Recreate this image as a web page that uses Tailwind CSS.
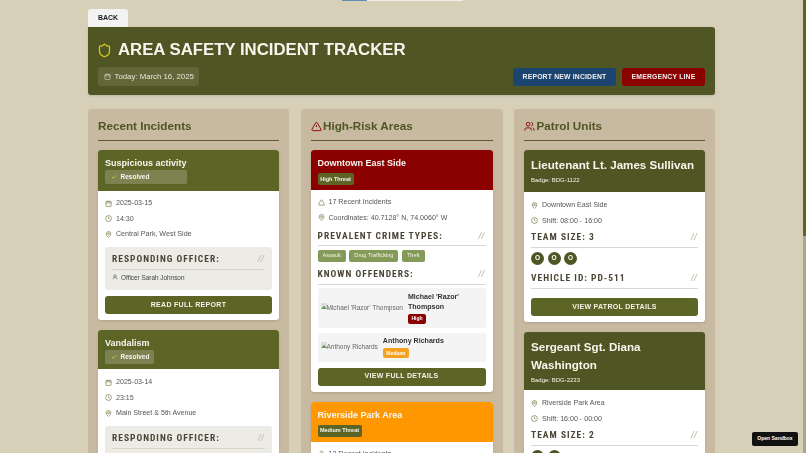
<!DOCTYPE html>
<html lang="en">
<head>
<meta charset="UTF-8">
<title>Area Safety Incident Tracker</title>
<script src="https://cdn.jsdelivr.net/npm/@tailwindcss/browser@4"></script>
</head>
<body class="h-[453px] overflow-hidden bg-[#d8cfb9] font-['Liberation_Sans',sans-serif] text-[#333]">
<div class="relative h-[453px] overflow-hidden">
  <!-- strip of the page above, cut off by the top edge -->
  <div class="absolute left-[342px] top-0 flex h-px">
    <div class="w-[25px] bg-[#5b8fb5]"></div>
    <div class="w-[96px] bg-[#f0efe9]"></div>
  </div>
  <!-- scrollbar -->
  <div class="absolute right-0 top-0 h-[453px] w-[3px] bg-[#a9a68f]"><div class="h-[236px] w-[3px] bg-[#5c6426]"></div></div>
  <div class="absolute bottom-[7px] right-[8px] z-10 flex h-[14px] w-[46px] items-center justify-center rounded-[2px] bg-[#111] text-[5px] font-bold text-white">Open Sandbox</div>

  <main class="ml-[88px] w-[627px] pt-[9px] will-change-transform">
    <button class="block h-[18px] w-[40px] rounded-t-[3px] bg-[#f3f3f1] text-[7px] font-bold text-[#1a1a2a]">BACK</button>

    <header class="flex h-[68px] justify-between rounded-b-[3px] rounded-tr-[3px] bg-[#4f5623] px-[10px] pt-[11px] shadow-sm">
      <div>
        <div class="flex items-center gap-[6.5px]">
          <svg class="-ml-[1.5px] h-[15px] w-[15px] text-[#dcc81c]" viewBox="0 0 24 24" fill="none" stroke="currentColor" stroke-width="2" stroke-linecap="round" stroke-linejoin="round"><path d="M20 13c0 5-3.5 7.5-7.66 8.95a1 1 0 0 1-.67-.01C7.5 20.5 4 18 4 13V6a1 1 0 0 1 1-1c2 0 4.5-1.2 6.24-2.72a1.17 1.17 0 0 1 1.52 0C14.51 3.81 17 5 19 5a1 1 0 0 1 1 1z"/></svg>
          <h1 class="text-[16.75px] font-bold leading-[24px] text-[#f7f5ee]">AREA SAFETY INCIDENT TRACKER</h1>
        </div>
        <div class="mt-[5px] flex h-[19px] w-[101px] items-center gap-[3.5px] rounded-[3px] bg-white/10 pl-[6px] text-[7.8px] text-[#e8e5d8]">
          <svg class="h-[7px] w-[7px]" viewBox="0 0 24 24" fill="none" stroke="currentColor" stroke-width="2"><rect x="3" y="5" width="18" height="17" rx="2"/><path d="M3 10h18M8 2v4M16 2v4"/></svg>
          Today: March 16, 2025
        </div>
      </div>
      <div class="mt-[30px] flex h-[18px] gap-[6px] text-[6.8px] font-bold tracking-[0.2px] text-[#eee]">
        <button class="w-[103px] rounded-[3px] bg-[#1c4470]">REPORT NEW INCIDENT</button>
        <button class="w-[83px] rounded-[3px] bg-[#8b0000]">EMERGENCY LINE</button>
      </div>
    </header>

    <div class="mt-[14px] grid grid-cols-[201px_202px_201px] gap-x-[11.5px]">

      <!-- Recent Incidents -->
      <section class="rounded-[3px] bg-[#c8baa0] px-[10px] pt-[10px]">
        <h2 class="h-[22px] border-b-[1px] border-[#5d5a30] text-[11.7px] font-bold leading-[14px] text-[#4f5623]">Recent Incidents</h2>
        <div class="mt-[9px] flex flex-col gap-[10px]">
          <article class="overflow-hidden rounded-[3px] bg-white shadow-sm">
            <div class="h-[41px] bg-[#5c6426] px-[7px] pt-[7px] text-[#f7f5ee]">
              <h3 class="text-[9px] font-bold leading-[12px]">Suspicious activity</h3>
              <span class="mt-[1px] flex h-[14px] w-[82px] items-center gap-[3.5px] rounded-[2px] bg-white/20 pl-[6px] text-[6.5px] font-bold">
                <svg class="h-[6px] w-[6px] text-[#d8d050]" viewBox="0 0 24 24" fill="none" stroke="currentColor" stroke-width="3"><path d="M20 6 9 17l-5-5"/></svg>Resolved</span>
            </div>
            <div class="px-[7px] pt-[8px] pb-[6px]">
              <ul class="flex flex-col gap-[7.5px] text-[7.1px] leading-[8px] text-[#555]">
                <li class="flex items-center gap-[4px]"><svg class="h-[7px] w-[7px] text-[#5c6426]" viewBox="0 0 24 24" fill="none" stroke="currentColor" stroke-width="2"><rect x="3" y="5" width="18" height="17" rx="2"/><path d="M3 10h18M8 2v4M16 2v4"/></svg>2025-03-15</li>
                <li class="flex items-center gap-[4px]"><svg class="h-[7px] w-[7px] text-[#5c6426]" viewBox="0 0 24 24" fill="none" stroke="currentColor" stroke-width="2"><circle cx="12" cy="12" r="10"/><path d="M12 6v6l4 2"/></svg>14:30</li>
                <li class="flex items-center gap-[4px]"><svg class="h-[7px] w-[7px] text-[#5c6426]" viewBox="0 0 24 24" fill="none" stroke="currentColor" stroke-width="2"><path d="M20 10c0 6-8 12-8 12s-8-6-8-12a8 8 0 0 1 16 0Z"/><circle cx="12" cy="10" r="3"/></svg>Central Park, West Side</li>
              </ul>
              <div class="mt-[8.5px] h-[43px] rounded-[3px] bg-[#ecebe5] px-[7px] pt-[4px]">
                <div class="flex h-[19px] items-end justify-between border-b border-[#d8d4c4] pb-[3.5px] font-['Roboto',sans-serif] [font-stretch:75%] text-[9.5px] font-bold leading-[12px] tracking-[1px] text-[#4a4535]"><span>RESPONDING OFFICER:</span><span class="italic text-[#c8c4b2]">//</span></div>
                <div class="mt-[3px] flex items-center gap-[3px] text-[6.4px] text-[#444]"><svg class="h-[6px] w-[6px]" viewBox="0 0 24 24" fill="none" stroke="currentColor" stroke-width="2"><circle cx="12" cy="8" r="5"/><path d="M20 21a8 8 0 0 0-16 0"/></svg>Officer Sarah Johnson</div>
              </div>
              <button class="mt-[6.5px] block h-[18px] w-full rounded-[3px] bg-[#5c6426] text-[7px] font-bold tracking-[0.3px] text-[#f5f3e8]">READ FULL REPORT</button>
            </div>
          </article>
          <article class="overflow-hidden rounded-[3px] bg-white shadow-sm">
            <div class="h-[39px] bg-[#5c6426] px-[7px] pt-[7px] text-[#f7f5ee]">
              <h3 class="text-[9px] font-bold leading-[12px]">Vandalism</h3>
              <span class="mt-[1px] flex h-[14px] w-[49px] items-center gap-[3.5px] rounded-[2px] bg-white/20 pl-[6px] text-[6.5px] font-bold">
                <svg class="h-[6px] w-[6px] text-[#d8d050]" viewBox="0 0 24 24" fill="none" stroke="currentColor" stroke-width="3"><path d="M20 6 9 17l-5-5"/></svg>Resolved</span>
            </div>
            <div class="px-[7px] pt-[9px] pb-[6px]">
              <ul class="flex flex-col gap-[7.5px] text-[7.1px] leading-[8px] text-[#555]">
                <li class="flex items-center gap-[4px]"><svg class="h-[7px] w-[7px] text-[#5c6426]" viewBox="0 0 24 24" fill="none" stroke="currentColor" stroke-width="2"><rect x="3" y="5" width="18" height="17" rx="2"/><path d="M3 10h18M8 2v4M16 2v4"/></svg>2025-03-14</li>
                <li class="flex items-center gap-[4px]"><svg class="h-[7px] w-[7px] text-[#5c6426]" viewBox="0 0 24 24" fill="none" stroke="currentColor" stroke-width="2"><circle cx="12" cy="12" r="10"/><path d="M12 6v6l4 2"/></svg>23:15</li>
                <li class="flex items-center gap-[4px]"><svg class="h-[7px] w-[7px] text-[#5c6426]" viewBox="0 0 24 24" fill="none" stroke="currentColor" stroke-width="2"><path d="M20 10c0 6-8 12-8 12s-8-6-8-12a8 8 0 0 1 16 0Z"/><circle cx="12" cy="10" r="3"/></svg>Main Street &amp; 5th Avenue</li>
              </ul>
              <div class="mt-[8.5px] h-[43px] rounded-[3px] bg-[#ecebe5] px-[7px] pt-[4px]">
                <div class="flex h-[19px] items-end justify-between border-b border-[#d8d4c4] pb-[3.5px] font-['Roboto',sans-serif] [font-stretch:75%] text-[9.5px] font-bold leading-[12px] tracking-[1px] text-[#4a4535]"><span>RESPONDING OFFICER:</span><span class="italic text-[#c8c4b2]">//</span></div>
              </div>
            </div>
          </article>
        </div>
      </section>

      <!-- High-Risk Areas -->
      <section class="rounded-[3px] bg-[#c8baa0] px-[10px] pt-[10px]">
        <h2 class="flex h-[22px] items-start gap-[1.5px] border-b-[1px] border-[#5d5a30] text-[11.7px] font-bold leading-[14px] text-[#4f5623]"><svg class="mt-[2px] h-[11px] w-[11px] text-[#8b0000]" viewBox="0 0 24 24" fill="none" stroke="currentColor" stroke-width="2"><path d="m21.7 18-8-14a2 2 0 0 0-3.5 0l-8 14A2 2 0 0 0 4 21h16a2 2 0 0 0 1.7-3Z"/><path d="M12 9v4M12 17h.01"/></svg>High-Risk Areas</h2>
        <div class="mt-[9px] flex flex-col gap-[10px]">
          <article class="overflow-hidden rounded-[3px] bg-white shadow-sm">
            <div class="h-[40px] bg-[#8b0000] px-[7px] pt-[7px] text-[#f7f5ee]">
              <h3 class="text-[9px] font-bold leading-[12px]">Downtown East Side</h3>
              <span class="mt-[4px] flex h-[12px] w-[36px] items-center justify-center rounded-[2px] bg-[#5c6426] text-[5.5px] font-bold">High Threat</span>
            </div>
            <div class="px-[7px] pt-[8px] pb-[6px]">
              <ul class="flex flex-col gap-[7.5px] text-[7.1px] leading-[8px] text-[#555]">
                <li class="flex items-center gap-[4px]"><svg class="h-[7px] w-[7px] text-[#5c6426]" viewBox="0 0 24 24" fill="none" stroke="currentColor" stroke-width="2"><path d="m21.7 18-8-14a2 2 0 0 0-3.5 0l-8 14A2 2 0 0 0 4 21h16a2 2 0 0 0 1.7-3Z"/></svg>17 Recent Incidents</li>
                <li class="flex items-center gap-[4px]"><svg class="h-[7px] w-[7px] text-[#5c6426]" viewBox="0 0 24 24" fill="none" stroke="currentColor" stroke-width="2"><path d="M20 10c0 6-8 12-8 12s-8-6-8-12a8 8 0 0 1 16 0Z"/><circle cx="12" cy="10" r="3"/></svg>Coordinates: 40.7128° N, 74.0060° W</li>
              </ul>
              <div class="mt-[6px] flex h-[18.5px] items-end justify-between border-b border-[#d8d8d8] pb-[3.5px] font-['Roboto',sans-serif] [font-stretch:75%] text-[9.5px] font-bold leading-[12px] tracking-[1px] text-[#4a4535]"><span>PREVALENT CRIME TYPES:</span><span class="italic text-[#c8c4b2]">//</span></div>
              <div class="mt-[3.5px] flex gap-[3.5px] text-[5.6px] text-[#f5f3e8]">
                <span class="flex h-[12px] items-center rounded-[2px] bg-[#849a58] px-[5px]">Assault</span>
                <span class="flex h-[12px] items-center rounded-[2px] bg-[#849a58] px-[5px]">Drug Trafficking</span>
                <span class="flex h-[12px] items-center rounded-[2px] bg-[#849a58] px-[5px]">Theft</span>
              </div>
              <div class="mt-[4px] flex h-[19px] items-end justify-between border-b border-[#d8d8d8] pb-[3.5px] font-['Roboto',sans-serif] [font-stretch:75%] text-[9.5px] font-bold leading-[12px] tracking-[1px] text-[#4a4535]"><span>KNOWN OFFENDERS:</span><span class="italic text-[#c8c4b2]">//</span></div>
              <div class="mt-[3px] flex h-[40px] items-center gap-[5px] rounded-[2px] bg-[#f4f4f4] pl-[3px]">
                <span class="flex items-center whitespace-nowrap text-[6.5px] text-[#666]"><svg class="h-[6px] w-[6px] shrink-0 -translate-y-[2px]" viewBox="0 0 16 16"><rect width="16" height="16" fill="#ddd"/><path d="M0 16 8 7l8 9Z" fill="#6a9a5a"/></svg>Michael 'Razor' Thompson</span>
                <div class="text-[7.1px] font-bold leading-[10.5px] text-[#333]">Michael 'Razor' Thompson<span class="mt-[1px] flex h-[10px] w-[18px] items-center justify-center rounded-[2px] bg-[#8b0000] text-[5px] text-white">High</span></div>
              </div>
              <div class="mt-[5px] flex h-[29px] items-center gap-[5px] rounded-[2px] bg-[#f4f4f4] pl-[3px]">
                <span class="flex items-center whitespace-nowrap text-[6.5px] text-[#666]"><svg class="h-[6px] w-[6px] shrink-0 -translate-y-[2px]" viewBox="0 0 16 16"><rect width="16" height="16" fill="#ddd"/><path d="M0 16 8 7l8 9Z" fill="#6a9a5a"/></svg>Anthony Richards</span>
                <div class="text-[7.1px] font-bold leading-[10.5px] text-[#333]">Anthony Richards<span class="mt-[1px] flex h-[10px] w-[26px] items-center justify-center rounded-[2px] bg-[#f5a020] text-[5px] text-white">Medium</span></div>
              </div>
              <button class="mt-[6px] block h-[18px] w-full rounded-[3px] bg-[#5c6426] text-[7px] font-bold tracking-[0.3px] text-[#f5f3e8]">VIEW FULL DETAILS</button>
            </div>
          </article>
          <article class="overflow-hidden rounded-[3px] bg-white shadow-sm">
            <div class="h-[40px] bg-[#ff9800] px-[7px] pt-[7px] text-[#f7f5ee]">
              <h3 class="text-[9px] font-bold leading-[12px]">Riverside Park Area</h3>
              <span class="mt-[4px] flex h-[12px] w-[44px] items-center justify-center rounded-[2px] bg-[#5c6426] text-[5.5px] font-bold">Medium Threat</span>
            </div>
            <ul class="flex flex-col px-[7px] pt-[8px] text-[7.1px] leading-[8px] text-[#555]">
              <li class="flex items-center gap-[4px]"><svg class="h-[7px] w-[7px] text-[#5c6426]" viewBox="0 0 24 24" fill="none" stroke="currentColor" stroke-width="2"><path d="m21.7 18-8-14a2 2 0 0 0-3.5 0l-8 14A2 2 0 0 0 4 21h16a2 2 0 0 0 1.7-3Z"/></svg>12 Recent Incidents</li>
            </ul>
          </article>
        </div>
      </section>

      <!-- Patrol Units -->
      <section class="rounded-[3px] bg-[#c8baa0] px-[10px] pt-[10px]">
        <h2 class="flex h-[22px] items-start gap-[1.5px] border-b-[1px] border-[#5d5a30] text-[11.7px] font-bold leading-[14px] text-[#4f5623]"><svg class="mt-[2px] h-[11px] w-[11px] text-[#8b0000]" viewBox="0 0 24 24" fill="none" stroke="currentColor" stroke-width="2"><path d="M16 21v-2a4 4 0 0 0-4-4H6a4 4 0 0 0-4 4v2"/><circle cx="9" cy="7" r="4"/><path d="M22 21v-2a4 4 0 0 0-3-3.87M16 3.13a4 4 0 0 1 0 7.75"/></svg>Patrol Units</h2>
        <div class="mt-[9px] flex flex-col gap-[10px]">
          <article class="overflow-hidden rounded-[3px] bg-white shadow-sm">
            <div class="h-[42px] bg-[#4f5623] px-[7px] pt-[7px] text-[#f7f5ee]">
              <h3 class="whitespace-nowrap text-[11.6px] font-bold leading-[16px]">Lieutenant Lt. James Sullivan</h3>
              <p class="mt-[3px] text-[6px] leading-[8px]">Badge: BDG-1122</p>
            </div>
            <div class="px-[7px] pt-[9px] pb-[6px]">
              <ul class="flex flex-col gap-[7.5px] text-[7.1px] leading-[8px] text-[#555]">
                <li class="flex items-center gap-[4px]"><svg class="h-[7px] w-[7px] text-[#5c6426]" viewBox="0 0 24 24" fill="none" stroke="currentColor" stroke-width="2"><path d="M20 10c0 6-8 12-8 12s-8-6-8-12a8 8 0 0 1 16 0Z"/><circle cx="12" cy="10" r="3"/></svg>Downtown East Side</li>
                <li class="flex items-center gap-[4px]"><svg class="h-[7px] w-[7px] text-[#5c6426]" viewBox="0 0 24 24" fill="none" stroke="currentColor" stroke-width="2"><circle cx="12" cy="12" r="10"/><path d="M12 6v6l4 2"/></svg>Shift: 08:00 - 16:00</li>
              </ul>
              <div class="mt-[4px] flex h-[19px] items-end justify-between border-b border-[#d8d8d8] pb-[3.5px] font-['Roboto',sans-serif] [font-stretch:75%] text-[9.5px] font-bold leading-[12px] tracking-[1px] text-[#4a4535]"><span>TEAM SIZE: 3</span><span class="italic text-[#c8c4b2]">//</span></div>
              <div class="mt-[4px] flex gap-[3.5px]">
                <span class="flex h-[13px] w-[13px] items-center justify-center rounded-full bg-[#4f5623] text-[6.5px] font-bold text-white">O</span>
                <span class="flex h-[13px] w-[13px] items-center justify-center rounded-full bg-[#4f5623] text-[6.5px] font-bold text-white">O</span>
                <span class="flex h-[13px] w-[13px] items-center justify-center rounded-full bg-[#4f5623] text-[6.5px] font-bold text-white">O</span>
              </div>
              <div class="mt-[5px] flex h-[19px] items-end justify-between border-b border-[#d8d8d8] pb-[3.5px] font-['Roboto',sans-serif] [font-stretch:75%] text-[9.5px] font-bold leading-[12px] tracking-[1px] text-[#4a4535]"><span>VEHICLE ID: PD-511</span><span class="italic text-[#c8c4b2]">//</span></div>
              <button class="mt-[9.5px] block h-[18px] w-full rounded-[3px] bg-[#5c6426] text-[7px] font-bold tracking-[0.3px] text-[#f5f3e8]">VIEW PATROL DETAILS</button>
            </div>
          </article>
          <article class="overflow-hidden rounded-[3px] bg-white shadow-sm">
            <div class="h-[58px] bg-[#4f5623] px-[7px] pt-[6px] text-[#f7f5ee]">
              <h3 class="text-[11.6px] font-bold leading-[18px]">Sergeant Sgt. Diana Washington</h3>
              <p class="mt-[2px] text-[6px] leading-[8px]">Badge: BDG-2233</p>
            </div>
            <div class="px-[7px] pt-[9px]">
              <ul class="flex flex-col gap-[7.5px] text-[7.1px] leading-[8px] text-[#555]">
                <li class="flex items-center gap-[4px]"><svg class="h-[7px] w-[7px] text-[#5c6426]" viewBox="0 0 24 24" fill="none" stroke="currentColor" stroke-width="2"><path d="M20 10c0 6-8 12-8 12s-8-6-8-12a8 8 0 0 1 16 0Z"/><circle cx="12" cy="10" r="3"/></svg>Riverside Park Area</li>
                <li class="flex items-center gap-[4px]"><svg class="h-[7px] w-[7px] text-[#5c6426]" viewBox="0 0 24 24" fill="none" stroke="currentColor" stroke-width="2"><circle cx="12" cy="12" r="10"/><path d="M12 6v6l4 2"/></svg>Shift: 16:00 - 00:00</li>
              </ul>
              <div class="mt-[4px] flex h-[19px] items-end justify-between border-b border-[#d8d8d8] pb-[3.5px] font-['Roboto',sans-serif] [font-stretch:75%] text-[9.5px] font-bold leading-[12px] tracking-[1px] text-[#4a4535]"><span>TEAM SIZE: 2</span><span class="italic text-[#c8c4b2]">//</span></div>
              <div class="mt-[4px] flex gap-[3.5px]">
                <span class="flex h-[13px] w-[13px] items-center justify-center rounded-full bg-[#4f5623] text-[6.5px] font-bold text-white">O</span>
                <span class="flex h-[13px] w-[13px] items-center justify-center rounded-full bg-[#4f5623] text-[6.5px] font-bold text-white">O</span>
              </div>
            </div>
          </article>
        </div>
      </section>
    </div>
  </main>
</div>
</body>
</html>
